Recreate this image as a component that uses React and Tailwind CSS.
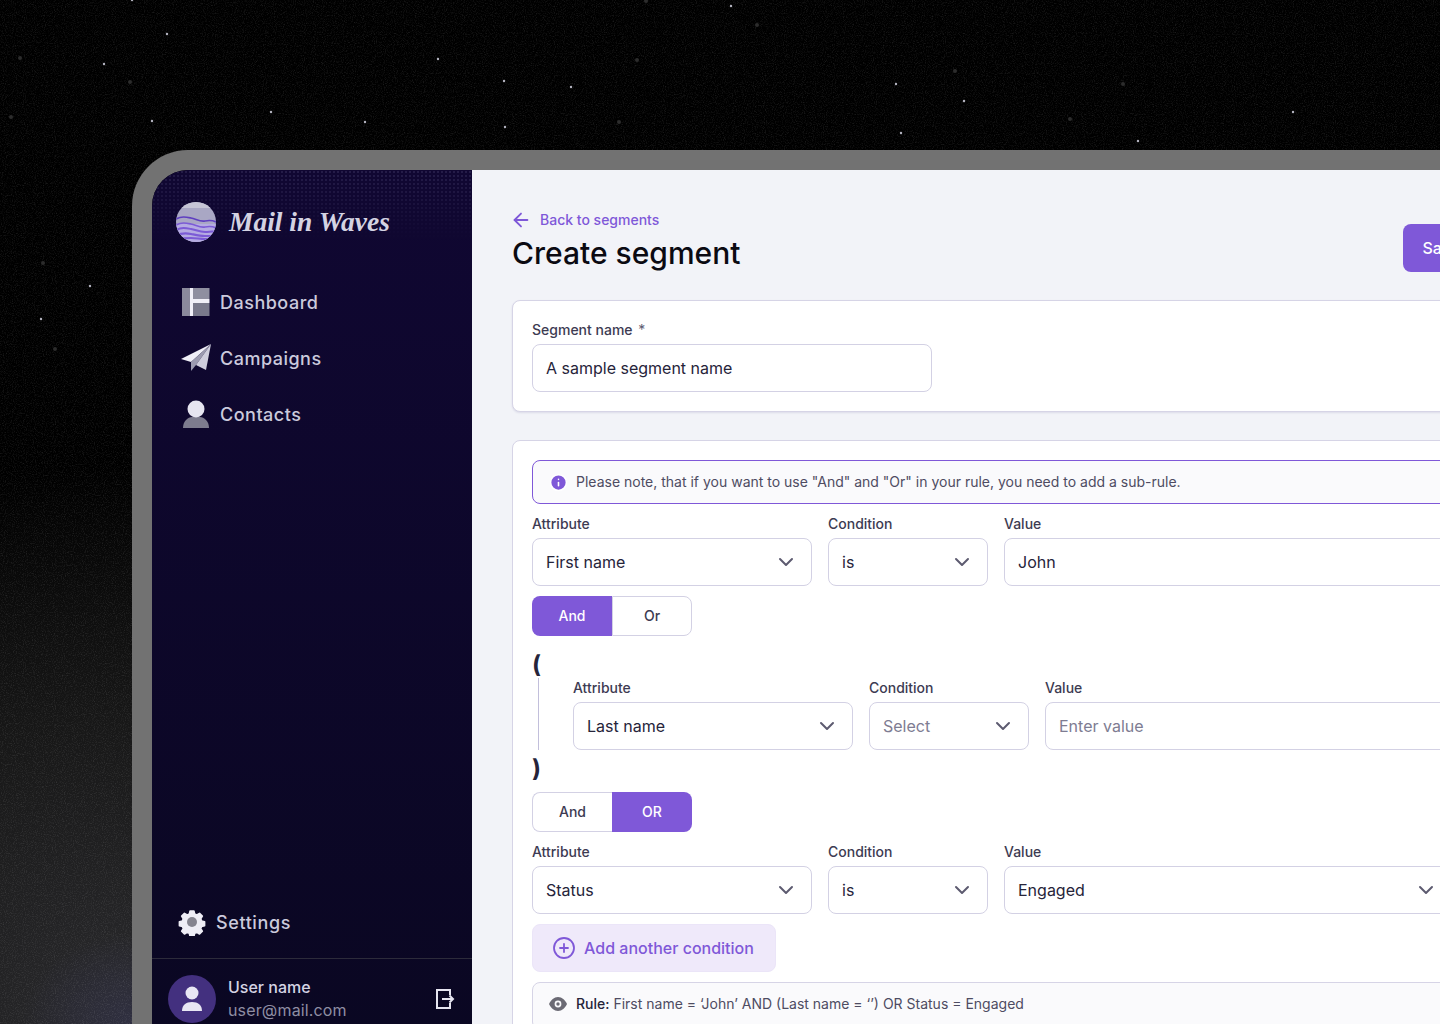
import React from "react";
import { ArrowLeft, ChevronDown, CirclePlus, Info } from "lucide-react";

const brightStars = [
  [438, 59], [504, 81], [571, 87], [271, 112], [152, 121], [365, 122], [505, 127], [104, 64],
  [167, 34], [132, 0], [731, 6], [896, 84], [964, 101], [901, 133], [1138, 141], [1293, 112],
  [90, 286], [41, 319],
];

const dimStars = [
  [20, 58], [130, 82], [11, 117], [637, 60], [619, 122], [646, 1], [757, 25], [955, 71],
  [1070, 119], [1123, 84], [43, 263], [55, 349],
];

const Backdrop = () => (
  <svg className="absolute inset-0 w-full h-full" width="1440" height="1024">
    <filter id="grain">
      <feTurbulence type="fractalNoise" baseFrequency="0.9" numOctaves="2" seed="4" />
      <feColorMatrix values="0 0 0 0 1  0 0 0 0 1  0 0 0 0 1  0 0 0 -1.6 0.85" />
    </filter>
    <rect width="1440" height="1024" filter="url(#grain)" opacity="0.16" />
    {dimStars.map(([x, y]) => (
      <circle key={`${x}-${y}`} cx={x} cy={y} r="2" fill="#2c2c2c" />
    ))}
    {brightStars.map(([x, y]) => (
      <circle key={`${x}-${y}`} cx={x} cy={y} r="1.2" fill="#b4b4c0" />
    ))}
  </svg>
);

const Logo = () => (
  <svg width="40" height="40" viewBox="0 0 40 40">
    <defs>
      <clipPath id="logo-clip">
        <circle cx="20" cy="20" r="20" />
      </clipPath>
    </defs>
    <g clipPath="url(#logo-clip)">
      <rect width="40" height="40" fill="#a9a7c4" />
      <rect width="40" height="6" fill="#c6c5d6" />
      <rect y="22" width="40" height="18" fill="#b5abe2" />
      <path d="M0 17c6-3 10-2 15-1s9 4 14 3 7-1 11 1" fill="none" stroke="#5f3fc0" strokeWidth="1.6" />
      <path d="M0 23c6-3 10-2 15-1s9 4 14 3 7-1 11 1" fill="none" stroke="#7c5bd6" strokeWidth="1.6" />
      <path d="M0 28c6-3 10-2 15-1s9 3 14 3 7-1 11 0" fill="none" stroke="#7c5bd6" strokeWidth="2" />
      <path d="M0 33c6-2 10-2 15-1s9 2 14 2 7 0 11 0" fill="none" stroke="#7c5bd6" strokeWidth="2.2" />
      <path d="M0 37c6-1 10-1 15-1s9 1 14 1 7 0 11 0" fill="none" stroke="#7c5bd6" strokeWidth="2.2" />
    </g>
  </svg>
);

const DashboardIcon = () => (
  <svg width="32" height="28" viewBox="0 0 32 28">
    <rect x="2" y="0" width="8" height="28" fill="#8b8a9c" />
    <rect x="13" y="0" width="16.5" height="11" fill="#8f8fa0" />
    <rect x="13" y="15" width="16.5" height="13" fill="#7a7a8c" />
    <rect x="10" y="0" width="3" height="28" fill="#f1f0f8" />
    <rect x="13" y="11" width="16.5" height="4" fill="#f1f0f8" />
  </svg>
);

const PlaneIcon = () => (
  <svg width="32" height="28" viewBox="0 0 32 28">
    <path d="M1 15 31 0 11 18z" fill="#f0eff7" />
    <path d="M11 18 31 0 16 21 11 27z" fill="#9c9bb0" />
    <path d="M31 0 26 26 16 21z" fill="#cfcedd" />
  </svg>
);

const PersonIcon = () => (
  <svg width="32" height="28" viewBox="0 0 32 28">
    <path d="M3 28c0-7 5-11 9-11h8c4 0 9 4 9 11z" fill="#7d7c8e" />
    <circle cx="16" cy="9" r="8.5" fill="#e6e5f0" />
  </svg>
);

const GearIcon = () => (
  <svg width="28" height="28" viewBox="0 0 24 24">
    <path
      d="M10 1h4l.7 3 2.2.9 2.7-1.6 2.8 2.8-1.6 2.7.9 2.2 3 .7v4l-3 .7-.9 2.2 1.6 2.7-2.8 2.8-2.7-1.6-2.2.9-.7 3h-4l-.7-3-2.2-.9-2.7 1.6-2.8-2.8 1.6-2.7-.9-2.2-3-.7v-4l3-.7.9-2.2-1.6-2.7 2.8-2.8 2.7 1.6 2.2-.9z"
      fill="#eeedf5"
      stroke="#eeedf5"
      strokeWidth="1.6"
      strokeLinejoin="round"
      transform="translate(1.8 1.8) scale(0.85)"
    />
    <circle cx="12" cy="12" r="4.3" fill="#85848f" />
  </svg>
);

const LogoutIcon = () => (
  <svg width="20" height="22" viewBox="0 0 20 22" fill="none" stroke="#e6e5f0" strokeWidth="2">
    <path d="M15 7V2H2v18h13v-5" />
    <path d="M7 11h11M14.5 7.5 18 11l-3.5 3.5" />
  </svg>
);

const EyeIcon = () => (
  <svg width="18" height="14" viewBox="0 0 18 14">
    <path d="M0 7c2-4 5-7 9-7s7 3 9 7c-2 4-5 7-9 7S2 11 0 7z" fill="#6b6a74" />
    <circle cx="9" cy="7" r="3.4" fill="#fafafc" />
    <circle cx="9" cy="7" r="1.7" fill="#6b6a74" />
  </svg>
);

const NavItem = ({ icon, label }) => (
  <div className="flex items-center h-14 pl-7">
    <div className="w-[40px] flex justify-start">{icon}</div>
    <span className="text-[18px] font-medium tracking-[0.5px] text-[#cbcadc]">{label}</span>
  </div>
);

const Sidebar = () => (
  <aside className="relative w-[320px] shrink-0 h-[868px] flex flex-col bg-gradient-to-b from-[#100732] to-[#0a0722]">
    <div className="absolute inset-x-0 top-0 h-[70px] bg-[radial-gradient(#3b3360_1px,transparent_1px)] bg-[length:4px_4px] opacity-50 [mask-image:linear-gradient(#000,transparent)]" />
    <div className="relative flex items-center gap-[13px] pl-6 h-[104px] shrink-0">
      <Logo />
      <span className="font-['Liberation_Serif'] italic font-bold text-[27.5px] text-[#d4d3e2] leading-none">
        Mail in Waves
      </span>
    </div>
    <nav>
      <NavItem icon={<DashboardIcon />} label="Dashboard" />
      <NavItem icon={<PlaneIcon />} label="Campaigns" />
      <NavItem icon={<PersonIcon />} label="Contacts" />
    </nav>
    <div className="mt-auto flex items-center h-14 pl-[26px] gap-[10px]">
      <GearIcon />
      <span className="text-[18px] font-medium tracking-[0.6px] text-[#cbcadc]">Settings</span>
    </div>
    <div className="border-t border-[#2c2b3a] flex items-center h-[80px] mt-[8px] shrink-0 pl-4 pr-[17px]">
      <div className="w-12 h-12 rounded-full bg-[#43307f] flex items-center justify-center shrink-0">
        <svg width="24" height="26" viewBox="0 0 24 26" fill="#e8e6f4">
          <circle cx="12" cy="7" r="6.5" />
          <path d="M2 25c0-6 4-9 10-9s10 3 10 9z" />
        </svg>
      </div>
      <div className="ml-3 flex-1">
        <div className="text-[16px] leading-[23px] font-medium text-[#d5d4e3]">User name</div>
        <div className="text-[16px] leading-[23px] text-[#8f8ea3] tracking-[0.15px]">user@mail.com</div>
      </div>
      <LogoutIcon />
    </div>
  </aside>
);

const Field = ({ label, className, children }) => (
  <div className={className}>
    <label className="block text-sm leading-5 font-medium text-[#3d3b52] mb-1">{label}</label>
    {children}
  </div>
);

const Input = ({ value, placeholder }) => (
  <div className="h-12 px-[13px] flex items-center bg-white border border-[#d3d1e4] rounded-lg text-base">
    {value ? <span className="text-[#26243a]">{value}</span> : <span className="text-[#7e7c92]">{placeholder}</span>}
  </div>
);

const Select = ({ value, placeholder }) => (
  <div className="h-12 pl-[13px] pr-[13px] flex items-center justify-between bg-white border border-[#d3d1e4] rounded-lg text-base">
    {value ? <span className="text-[#26243a]">{value}</span> : <span className="text-[#7e7c92]">{placeholder}</span>}
    <ChevronDown className="w-6 h-6 text-[#5d5b70]" strokeWidth={2} />
  </div>
);

const Toggle = ({ left, right, active }) => {
  const on = "bg-[#7f58d8] text-white";
  const off = "bg-white text-[#3d3b52] border border-[#d3d1e4]";
  return (
    <div className="flex w-[160px] h-10 text-sm font-medium">
      <div className={`w-20 flex items-center justify-center rounded-l-lg ${active === "left" ? on : off + " border-r-0"}`}>
        {left}
      </div>
      <div className={`w-20 flex items-center justify-center rounded-r-lg ${active === "right" ? on : off}`}>
        {right}
      </div>
    </div>
  );
};

const Row = ({ attribute, condition, conditionPlaceholder, children }) => (
  <div className="flex gap-4">
    <Field label="Attribute" className="w-[280px] shrink-0">
      <Select value={attribute} />
    </Field>
    <Field label="Condition" className="w-[160px] shrink-0">
      <Select value={condition} placeholder={conditionPlaceholder} />
    </Field>
    <Field label="Value" className="flex-1 min-w-0">
      {children}
    </Field>
  </div>
);

const Content = () => (
  <main className="flex-1 h-[868px] bg-[#f2f3f8] pl-10 pr-[33px] pt-10 overflow-hidden">
    <div className="flex items-end justify-between">
      <div>
        <a className="flex items-center h-5 gap-2 -ml-[2px] text-sm leading-5 font-medium text-[#7f58d8]">
          <ArrowLeft className="w-[22px] h-[22px]" strokeWidth={2} />
          Back to segments
        </a>
        <h1 className="mt-[5px] pb-[1px] text-[30px] leading-9 font-medium text-[#0b0a12]">Create segment</h1>
      </div>
      <button className="h-12 px-5 rounded-lg bg-[#7f58d8] text-white text-base font-medium">Save</button>
    </div>

    <section className="mt-7 mr-2 bg-white border border-[#d6d4e6] rounded-lg p-[19px] shadow-[0_1px_2px_rgba(60,50,120,0.12)]">
      <Field
        label={
          <>
            Segment name <span className="ml-[2px] font-normal text-[#5d5b70]">*</span>
          </>
        }
        className="w-[400px]"
      >
        <Input value="A sample segment name" />
      </Field>
    </section>

    <section className="mt-7 mr-2 bg-white border border-[#d6d4e6] rounded-lg p-[19px] flex flex-col gap-[10px]">
      <div className="h-11 flex items-center gap-2 px-4 bg-[#fafafc] border border-[#7f58d8] rounded-lg text-sm text-[#4e4c62]">
        <Info className="w-[19px] h-[19px] fill-[#7f58d8] text-white" strokeWidth={2} />
        Please note, that if you want to use "And" and "Or" in your rule, you need to add a sub-rule.
      </div>
      <Row attribute="First name" condition="is">
        <Input value="John" />
      </Row>
      <Toggle left="And" right="Or" active="left" />
      <div>
        <div className="h-8 text-2xl leading-[37px] font-bold text-[#26243a]">(</div>
        <div className="ml-[6px] pl-[34px] border-l border-[#c2bfdb]">
          <Row attribute="Last name" conditionPlaceholder="Select">
            <Input placeholder="Enter value" />
          </Row>
        </div>
        <div className="h-8 text-2xl leading-[37px] font-bold text-[#26243a]">)</div>
      </div>
      <Toggle left="And" right="OR" active="right" />
      <Row attribute="Status" condition="is">
        <Select value="Engaged" />
      </Row>
      <button className="w-[244px] h-12 flex items-center justify-center gap-2 rounded-lg bg-[#efe9fa] border border-[#ebe5f8] text-base font-medium text-[#7f58d8]">
        <CirclePlus className="w-6 h-6 -ml-[2px]" strokeWidth={1.8} />
        Add another condition
      </button>
      <div className="h-12 flex items-start gap-[9px] pt-[11px] px-4 bg-[#fafafc] border border-[#d6d4e6] rounded-lg text-sm text-[#4e4c62]">
        <div className="h-5 flex items-center shrink-0">
          <EyeIcon />
        </div>
        <span>
          <span className="font-medium text-[#26243a]">Rule:</span> First name = ‘John’ AND (Last name = ‘’) OR Status = Engaged
        </span>
      </div>
    </section>
  </main>
);

const App = () => (
  <div className="relative h-[1024px] w-[1440px] overflow-hidden font-['Inter',sans-serif] bg-[radial-gradient(ellipse_110px_90px_at_132px_1024px,#2f2f40,transparent_100%),radial-gradient(ellipse_620px_560px_at_130px_1024px,#2b2b2e,#171717_55%,transparent_100%),linear-gradient(#000,#000)]">
    <Backdrop />
    <div className="relative ml-[132px] pt-[150px] w-[1401px]">
      <div className="flex border-[20px] border-b-0 border-[#727272] rounded-t-[56px] overflow-hidden">
        <Sidebar />
        <Content />
      </div>
    </div>
  </div>
);

export default App;
